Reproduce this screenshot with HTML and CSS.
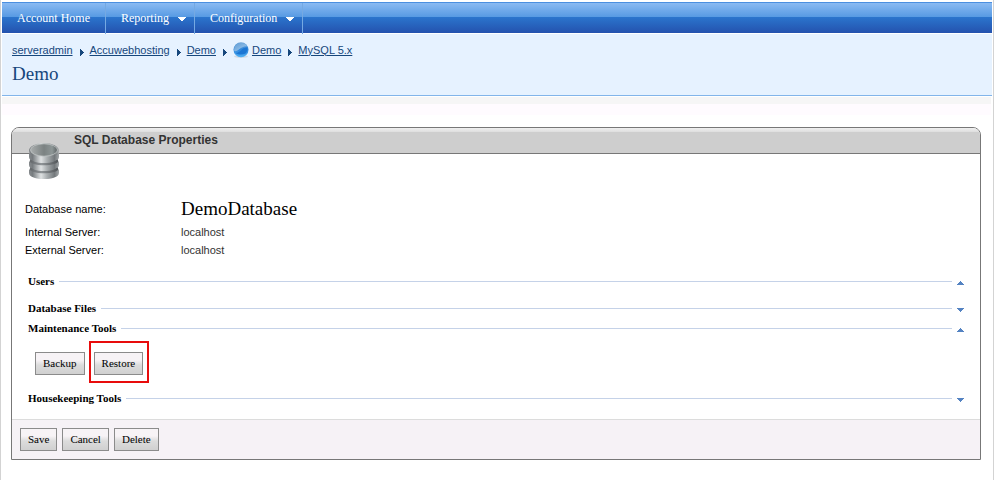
FILE: index.html
```
<!DOCTYPE html>
<html lang="en">
<head>
<meta charset="utf-8">
<title>SQL Database Properties</title>
<link rel="stylesheet" href="styles.css">
</head>
<body>
<div class="page">
  <nav class="menu">
    <a class="menu-item" href="#">Account Home</a>
    <a class="menu-item" href="#">Reporting <svg class="caret" width="8" height="4" viewBox="0 0 8 4"><path d="M0 0h8v1H7v1H6v1H5v1H3V3H2V2H1V1H0z"/></svg></a>
    <a class="menu-item" href="#">Configuration <svg class="caret" width="8" height="4" viewBox="0 0 8 4"><path d="M0 0h8v1H7v1H6v1H5v1H3V3H2V2H1V1H0z"/></svg></a>
  </nav>
  <header class="location">
    <div class="crumbs">
      <a href="#">serveradmin</a>
      <svg class="sep" width="4" height="7" viewBox="0 0 4 7"><path d="M0 0h1v1h1v1h1v1h1v1H3v1H2v1H1v1H0z"/></svg>
      <a href="#">Accuwebhosting</a>
      <svg class="sep" width="4" height="7" viewBox="0 0 4 7"><path d="M0 0h1v1h1v1h1v1h1v1H3v1H2v1H1v1H0z"/></svg>
      <a href="#">Demo</a>
      <svg class="sep" width="4" height="7" viewBox="0 0 4 7"><path d="M0 0h1v1h1v1h1v1h1v1H3v1H2v1H1v1H0z"/></svg>
      <span class="space"><svg width="16" height="16" viewBox="0 0 16 16">
        <defs>
          <linearGradient id="orb" x1="0" y1="0" x2="0" y2="1"><stop offset="0" stop-color="#6fa6d8"/><stop offset=".5" stop-color="#2f86da"/><stop offset="1" stop-color="#4fb0f4"/></linearGradient>
          <linearGradient id="gloss" x1="0" y1="0" x2="1" y2="1"><stop offset="0" stop-color="#5f9bd3"/><stop offset="1" stop-color="#a5cdf0"/></linearGradient>
        </defs>
        <ellipse cx="8" cy="14.500" rx="7" ry="1.500" fill="#cfd9e4"/>
        <circle cx="8" cy="7.700" r="7.500" fill="url(#orb)"/>
        <path d="M1.200 9C.5 4 4 1 8 1c3 0 5 1.200 6 3.200C10.500 4 8.500 5.500 6.500 7 5 8.500 3 9.500 1.200 9z" fill="url(#gloss)"/>
        <path d="M2.500 11c3.500-.5 5-2 7-4 1-1 3-1.500 5-1.500 0 2.500-.5 4.500-2 6-3 1.500-7 1.500-10-.5z" fill="#1b76d4"/>
      </svg><a href="#">Demo</a></span>
      <svg class="sep" width="4" height="7" viewBox="0 0 4 7"><path d="M0 0h1v1h1v1h1v1h1v1H3v1H2v1H1v1H0z"/></svg>
      <a href="#">MySQL 5.x</a>
    </div>
    <h1>Demo</h1>
  </header>
  <div class="strip"></div>
  <main class="panel">
    <div class="panel-head">
      <svg class="db-icon" width="32" height="38" viewBox="0 0 32 38">
        <defs>
          <linearGradient id="metal"><stop offset="0" stop-color="#85898c"/><stop offset=".12" stop-color="#777c7f"/><stop offset=".4" stop-color="#dfe2e3"/><stop offset=".6" stop-color="#a9aeb0"/><stop offset=".85" stop-color="#74797c"/><stop offset="1" stop-color="#a4a8aa"/></linearGradient>
          <linearGradient id="groove"><stop offset="0" stop-color="#65696c"/><stop offset=".4" stop-color="#8e9396"/><stop offset="1" stop-color="#55595c"/></linearGradient>
          <linearGradient id="well"><stop offset="0" stop-color="#a9adad"/><stop offset=".5" stop-color="#7b8282"/><stop offset=".8" stop-color="#8d9696"/><stop offset="1" stop-color="#5b6163"/></linearGradient>
        </defs>
        <path d="M2 9v23c3 6 25 6 28 0V9z" fill="url(#groove)"/>
        <path d="M1 26c0 7 30 7 30 0v5c0 8-30 8-30 0z" fill="url(#metal)"/>
        <path d="M1 18c0 7 30 7 30 0v5c0 8-30 8-30 0z" fill="url(#metal)"/>
        <path d="M1 9c0 8 30 8 30 0v6c0 8-30 8-30 0z" fill="url(#metal)"/>
        <path d="M3 18.500c5 5 21 5 26 0M3 26.500c5 5 21 5 26 0" fill="none" stroke="url(#groove)" stroke-width="1.500"/>
        <ellipse cx="16" cy="8.500" rx="15" ry="7.500" fill="url(#metal)"/>
        <ellipse cx="16" cy="8" rx="13.500" ry="6.200" fill="url(#well)" stroke="#c2c6c7" stroke-width=".8"/>
      </svg>
      <h2>SQL Database Properties</h2>
    </div>
    <div class="panel-body">
      <dl class="facts">
        <dt>Database name:</dt><dd class="big">DemoDatabase</dd>
        <dt>Internal Server:</dt><dd>localhost</dd>
        <dt>External Server:</dt><dd>localhost</dd>
      </dl>
      <section class="group users">
        <h3>Users</h3><svg class="toggle" width="7" height="4" viewBox="0 0 7 4"><path d="M0 4V3h1V2h1V1h1V0h1v1h1v1h1v1h1v1z"/></svg>
      </section>
      <section class="group">
        <h3>Database Files</h3><svg class="toggle" width="7" height="4" viewBox="0 0 7 4"><path d="M0 0v1h1v1h1v1h1v1h1V3h1V2h1V1h1V0z"/></svg>
      </section>
      <section class="group">
        <h3>Maintenance Tools</h3><svg class="toggle" width="7" height="4" viewBox="0 0 7 4"><path d="M0 4V3h1V2h1V1h1V0h1v1h1v1h1v1h1v1z"/></svg>
      </section>
      <div class="tools">
        <button type="button">Backup</button>
        <span class="highlight"><button type="button">Restore</button></span>
      </div>
      <section class="group">
        <h3>Housekeeping Tools</h3><svg class="toggle" width="7" height="4" viewBox="0 0 7 4"><path d="M0 0v1h1v1h1v1h1v1h1V3h1V2h1V1h1V0z"/></svg>
      </section>
    </div>
    <footer class="actions">
      <button type="button">Save</button>
      <button type="button">Cancel</button>
      <button type="button">Delete</button>
    </footer>
  </main>
</div>
</body>
</html>
```
FILE: styles.css
```
* { box-sizing: border-box; }
body {
  margin: 0;
  background: #fff;
  color: #000;
  font: 11px/18px "Liberation Sans", Arial, sans-serif;
}
.page {
  min-height: 100vh;
  padding: 2px 1px 0;
  border: solid #d3d3d3;
  border-width: 0 1px;
}
.menu {
  display: flex;
  height: 31px;
  border-top: 1px solid #4b8fe0;
  background: linear-gradient(#8abaf2, #579ae3 14px, #2b75cd 14px, #2452ae);
}
.menu-item {
  display: flex;
  align-items: center;
  gap: 9px;
  height: 31px;
  padding: 0 8px 1px 15px;
  border-right: 1px solid #75a9e2;
  color: #fff;
  font: 12px/16px "Liberation Serif", "Times New Roman", serif;
  text-decoration: none;
}
.menu-item:first-child { padding-right: 15px; }
.caret { fill: #fff; margin-top: 2px; }
.location {
  margin-top: 1px;
  height: 62px;
  padding: 7px 10px 0;
  border-bottom: 1px solid #82b5ea;
  background: #e6f2ff;
}
.crumbs {
  display: flex;
  align-items: center;
  gap: 6px;
  height: 17px;
}
.crumbs a { color: #16477c; }
.sep { fill: #16477c; margin: 5px 0 0 1px; }
.space { display: flex; align-items: center; gap: 3px; }
h1 {
  margin: 4px 0 0;
  color: #16477c;
  font: 19px/24px "Liberation Serif", "Times New Roman", serif;
}
.strip {
  height: 18px;
  margin: 1px 1px 12px 0;
  border-top: 7px solid #f6f6f6;
  background: #fffbff;
}
.panel {
  margin: 0 11px 0 9px;
  border: 1px solid #777;
  border-radius: 8px 8px 0 0;
}
.panel-head {
  position: relative;
  height: 26px;
  padding-left: 62px;
  border-bottom: 1px solid #777;
  border-radius: 7px 7px 0 0;
  background: linear-gradient(#f0f0f0, #dedede 4px, #cecece 4px);
}
.db-icon { position: absolute; left: 16px; top: 14px; }
h2 {
  margin: 0;
  color: #333;
  font-size: 12px;
  line-height: 24px;
}
.panel-body { padding: 41px 13px 11px; }
.facts {
  display: grid;
  grid-template-columns: 156px 1fr;
  align-items: center;
  margin: 0 0 12px;
}
.facts dd { margin: 0; color: #333; }
.facts .big {
  color: #000;
  font: 19px/28px "Liberation Serif", "Times New Roman", serif;
}
.group {
  display: flex;
  align-items: center;
  gap: 5px;
  height: 20px;
  padding: 0 3px;
}
.group.users { margin-bottom: 7px; }
h3 {
  display: flex;
  flex: 1;
  align-items: center;
  gap: 5px;
  margin: 0;
  font: bold 11px/20px "Liberation Serif", "Times New Roman", serif;
}
h3::after {
  content: "";
  flex: 1;
  height: 1px;
  background: #c5d2e8;
}
.toggle { fill: #5483c2; margin-top: 4px; }
.tools {
  display: flex;
  align-items: baseline;
  gap: 4px;
  padding: 3px 10px 5px;
}
.highlight {
  padding: 9px 4px 6px 3px;
  border: 2px solid #e80c0c;
}
button {
  display: block;
  height: 23px;
  padding: 0 7px;
  border: 1px solid #8b8b8b;
  border-radius: 0;
  background: linear-gradient(#f7f3f6 7px, #dcdcdc 12px, #d0d0d0);
  color: #000;
  font: 11px/15px "Liberation Serif", "Times New Roman", serif;
}
.actions {
  display: flex;
  gap: 5px;
  padding: 8px;
  border-top: 1px solid #dcdcdc;
  background: #f6f2f6;
}
```
